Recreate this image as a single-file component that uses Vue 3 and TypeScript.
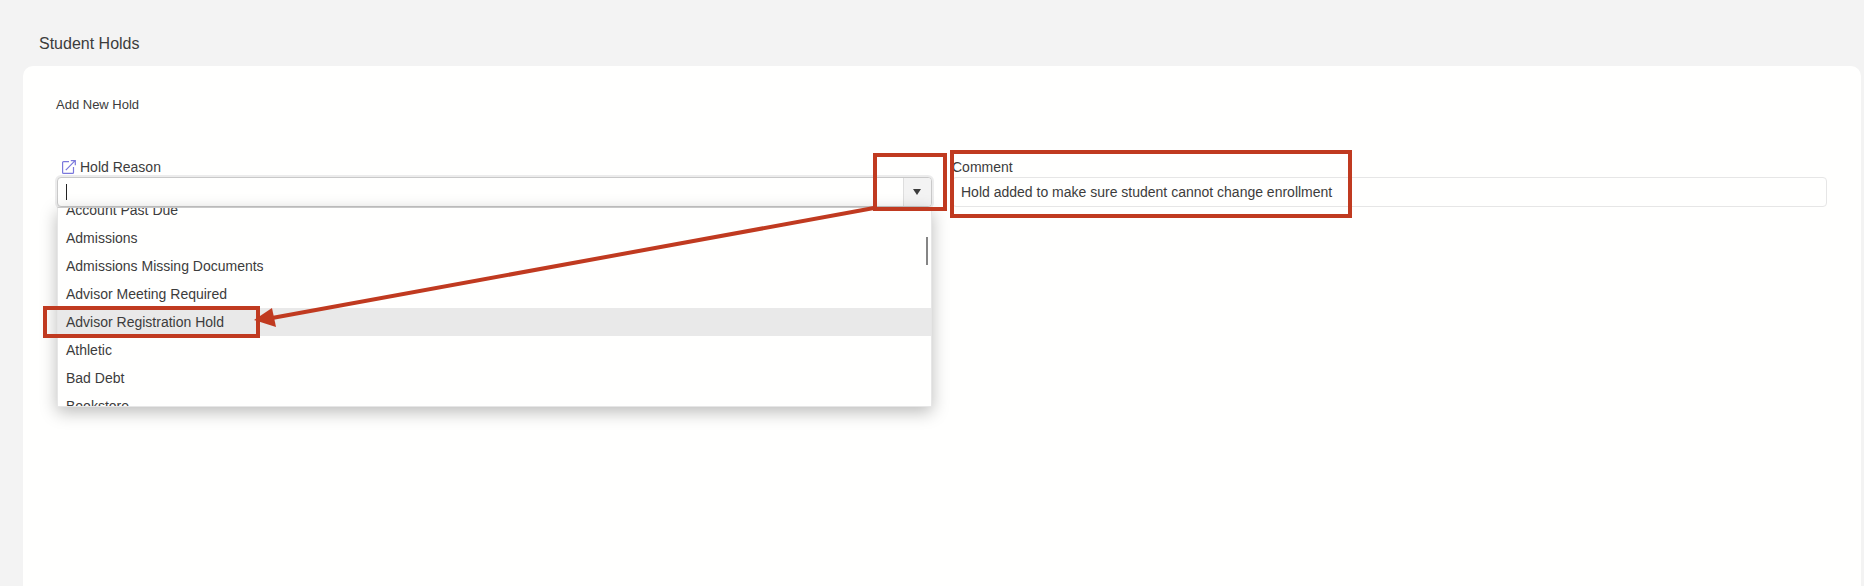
<script setup lang="ts">
import { ref } from 'vue'

const reason = ref('')
const comment = ref('Hold added to make sure student cannot change enrollment')
const highlighted = ref('Advisor Registration Hold')

const reasons: string[] = [
  'Account Past Due',
  'Admissions',
  'Admissions Missing Documents',
  'Advisor Meeting Required',
  'Advisor Registration Hold',
  'Athletic',
  'Bad Debt',
  'Bookstore',
]
</script>

<template>
  <main class="page">
    <h1 class="page-title">Student Holds</h1>
    <section class="card">
      <h2 class="card-title">Add New Hold</h2>
      <form class="fields" @submit.prevent>
        <div class="field">
          <div class="label-row linked">
            <a href="#" class="open-link" aria-label="Open hold reasons">
              <svg width="14" height="14" viewBox="0 0 14 14" fill="none" stroke="#7a78dc" stroke-width="1.2">
                <path d="M7 1.6H1.600Q.6 1.6.6 2.6V12.400Q.6 13.4 1.6 13.4H10.500Q11.500 13.4 11.500 12.400V7" />
                <path d="M3.800 10.200 12.600 1.200M8.800.7H13.300V5.200" />
              </svg>
            </a>
            <label for="reason">Hold Reason</label>
          </div>
          <div class="combo">
            <input
              id="reason"
              v-model="reason"
              class="combo-input"
              type="text"
              role="combobox"
              aria-expanded="true"
              aria-controls="reason-list"
              autocomplete="off"
            />
            <span class="caret"></span>
            <button type="button" class="combo-button" aria-label="Show hold reasons">
              <svg width="8" height="6" viewBox="0 0 8 6"><path d="M0 0H8L4 6Z" fill="#3c3c3c" /></svg>
            </button>
            <div class="popup">
              <div class="viewport">
                <ul id="reason-list" class="options" role="listbox" aria-label="Hold Reason">
                  <li
                    v-for="item in reasons"
                    :key="item"
                    class="option"
                    :class="{ active: item === highlighted }"
                    role="option"
                    :aria-selected="item === highlighted"
                    @mouseenter="highlighted = item"
                    @click="reason = item"
                  >
                    {{ item }}
                  </li>
                </ul>
              </div>
              <span class="thumb"></span>
            </div>
          </div>
        </div>
        <div class="field">
          <div class="label-row">
            <label for="comment">Comment</label>
          </div>
          <input id="comment" v-model="comment" class="text-input" type="text" />
        </div>
      </form>
    </section>
    <svg class="callouts" width="1400" height="400" viewBox="0 0 1400 400" fill="none" stroke="#c03a20" stroke-width="4" aria-hidden="true">
      <rect x="875" y="155" width="70" height="54" />
      <rect x="952" y="152" width="398" height="64" />
      <rect x="45" y="308" width="213" height="28" />
      <path d="M874 208 272 318" />
      <path d="M254 320 272 308 276 327Z" fill="#c03a20" stroke="none" />
    </svg>
  </main>
</template>

<style>
body {
  margin: 0;
  background: #f3f3f3;
}
</style>

<style scoped>
.page {
  position: relative;
  box-sizing: border-box;
  display: flex;
  flex-direction: column;
  min-height: 100vh;
  padding: 33px 3px 0 23px;
  overflow: hidden;
  background: #f3f3f3;
  color: #3c3c3c;
  font-family: "Liberation Sans", Arial, sans-serif;
  font-size: 14px;
}
.page-title {
  margin: 0 0 11px 16px;
  font-size: 16px;
  line-height: 22px;
  font-weight: 400;
}
.card {
  flex: 1;
  padding: 29px 34px 40px;
  border-radius: 10px 10px 0 0;
  background: #fffffe;
}
.card-title {
  margin: 0 0 42px -1px;
  font-size: 13px;
  line-height: 20px;
  font-weight: 400;
}
.fields {
  display: grid;
  grid-template-columns: 1fr 1fr;
  gap: 20px;
}
.field {
  min-width: 0;
}
.label-row {
  display: flex;
  align-items: center;
  height: 18px;
  padding: 1px 0;
}
.linked {
  gap: 4px;
  padding-left: 5px;
}
.open-link {
  display: flex;
}
.combo {
  position: relative;
  box-sizing: border-box;
  display: flex;
  height: 30px;
  border: 1px solid #c9c9c9;
  border-radius: 4px;
  background: #fffffe;
  box-shadow: 0 0 0 2px #ececec;
}
.combo-input {
  flex: 1;
  min-width: 0;
  padding: 0 8px;
  border: 0;
  outline: 0;
  background: transparent;
  color: inherit;
  font: inherit;
}
.caret {
  position: absolute;
  left: 8px;
  top: 6px;
  width: 1px;
  height: 16px;
  background: #222;
}
.combo-button {
  display: flex;
  align-items: center;
  justify-content: center;
  width: 28px;
  padding: 0 2px 0 0;
  border: 0;
  border-left: 1px solid #dedede;
  border-radius: 0 3px 3px 0;
  background: #f3f3f3;
}
.popup {
  position: absolute;
  left: -1px;
  right: -1px;
  top: 29px;
  box-sizing: border-box;
  height: 200px;
  border: 1px solid #e6e6e6;
  border-top-color: #c9c9c9;
  background: #fffffe;
  box-shadow: 0 5px 16px rgba(0, 0, 0, 0.27);
}
.viewport {
  height: 100%;
  overflow: hidden;
}
.options {
  margin: -12px 0 0;
  padding: 0;
  list-style: none;
}
.option {
  padding: 0 8px;
  line-height: 28px;
  white-space: nowrap;
}
.option.active {
  background: #e9e9e9;
}
.thumb {
  position: absolute;
  right: 3px;
  top: 29px;
  width: 2px;
  height: 28px;
  background: #858585;
}
.text-input {
  display: block;
  box-sizing: border-box;
  width: 100%;
  height: 30px;
  padding: 0 8px;
  border: 1px solid #e6e6e6;
  border-radius: 4px;
  outline: 0;
  background: #fffffe;
  color: inherit;
  font: inherit;
}
.callouts {
  position: absolute;
  left: 0;
  top: 0;
  pointer-events: none;
}
</style>
